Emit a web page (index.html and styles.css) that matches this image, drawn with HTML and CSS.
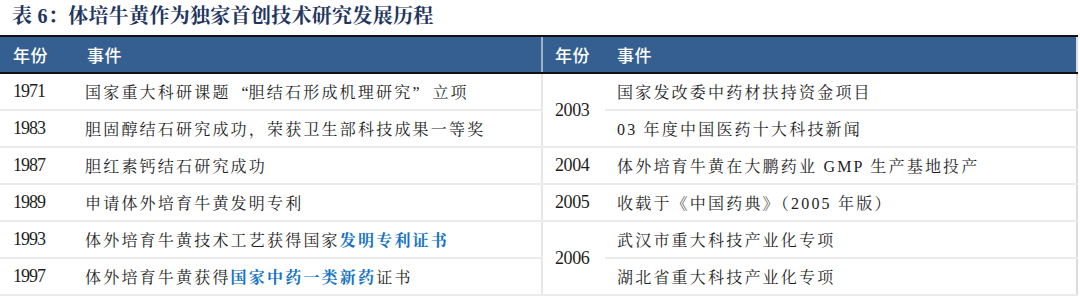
FILE: index.html
```html
<!DOCTYPE html>
<html lang="zh-CN">
<head>
<meta charset="utf-8">
<link rel="stylesheet" href="styles.css">
</head>
<body>
<div class="title">表 6：体培牛黄作为独家首创技术研究发展历程</div>
<table class="tbl">
  <thead>
    <tr>
      <th class="yr">年份</th><th class="ev">事件</th>
      <th class="yr2">年份</th><th class="ev2">事件</th>
    </tr>
  </thead>
  <tbody>
    <tr>
      <td class="yr">1971</td>
      <td class="ev">国家重大科研课题<span class="q open">“</span>胆结石形成机理研究<span class="q close">”</span>立项</td>
      <td class="yr2" rowspan="2">2003</td>
      <td class="ev2">国家发改委中药材扶持资金项目</td>
    </tr>
    <tr>
      <td class="yr">1983</td>
      <td class="ev">胆固醇结石研究成功，荣获卫生部科技成果一等奖</td>
      <td class="ev2">03 年度中国医药十大科技新闻</td>
    </tr>
    <tr>
      <td class="yr">1987</td>
      <td class="ev">胆红素钙结石研究成功</td>
      <td class="yr2">2004</td>
      <td class="ev2">体外培育牛黄在大鹏药业 GMP 生产基地投产</td>
    </tr>
    <tr>
      <td class="yr">1989</td>
      <td class="ev">申请体外培育牛黄发明专利</td>
      <td class="yr2">2005</td>
      <td class="ev2">收载于《中国药典》（2005 年版）</td>
    </tr>
    <tr>
      <td class="yr">1993</td>
      <td class="ev">体外培育牛黄技术工艺获得国家<span class="hl">发明专利证书</span></td>
      <td class="yr2" rowspan="2">2006</td>
      <td class="ev2">武汉市重大科技产业化专项</td>
    </tr>
    <tr>
      <td class="yr">1997</td>
      <td class="ev">体外培育牛黄获得<span class="hl">国家中药一类新药</span>证书</td>
      <td class="ev2">湖北省重大科技产业化专项</td>
    </tr>
  </tbody>
</table>
</body>
</html>
```

FILE: styles.css
```css
html, body {
  margin: 0;
  padding: 0;
  background: #ffffff;
}

body {
  width: 1080px;
  height: 308px;
  overflow: hidden;
  font-family: "Liberation Serif", "Noto Serif CJK SC", "Noto Sans CJK SC", serif;
  color: #1e1e1e;
}

.title {
  height: 35px;
  line-height: 32px;
  padding-left: 12px;
  font-size: 20px;
  font-weight: 700;
  letter-spacing: 0.3px;
  color: #1f365e;
  box-sizing: border-box;
}

.tbl {
  width: 1078px;
  border-collapse: collapse;
  table-layout: fixed;
  border-right: 2px solid #dcdcdc;
}

.tbl th {
  background: #365f91;
  color: #ffffff;
  font-family: "Noto Sans CJK SC", sans-serif;
  font-weight: 500;
  font-size: 17px;
  letter-spacing: 0.5px;
  text-align: left;
  height: 35px;
  padding: 0 0 0 13px;
  border-top: 2px solid #111111;
  border-bottom: 2px solid #111111;
}

.tbl td {
  height: 35px;
  padding: 0 0 0 13px;
  font-size: 16px;
  vertical-align: middle;
  border-bottom: 2px solid #ebebeb;
  white-space: nowrap;
}

.tbl td.yr,
.tbl td.yr2 {
  font-size: 18px;
}

.tbl .yr { width: 59px; }
.tbl .ev { width: 454px; }
.tbl .yr2 { width: 50px; padding-left: 12px; }
.tbl .ev2 { padding-left: 12px; }

.tbl th.ev { padding-left: 15px; }

.tbl td.ev,
.tbl td.ev2 {
  letter-spacing: 2.2px;
}

.tbl td.yr {
  letter-spacing: -1px;
}

.tbl td.yr2 {
  letter-spacing: -0.4px;
  border-left: 2px solid #e6e6e6;
}

.tbl th.yr2 {
  border-left: 2px solid #9fb1c9;
}

.q {
  display: inline-block;
  width: 18px;
  letter-spacing: 0;
}

.q.open {
  text-align: right;
}

.q.close {
  text-align: left;
  margin-right: 2px;
}

.hl {
  color: #1674c2;
  font-weight: 700;
}
```
